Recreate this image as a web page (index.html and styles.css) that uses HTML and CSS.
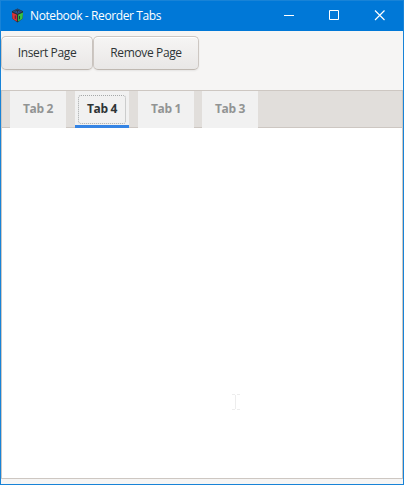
FILE: index.html
```html
<!DOCTYPE html>
<html lang="en">
<head>
<meta charset="utf-8">
<title>Notebook - Reorder Tabs</title>
<link rel="stylesheet" href="styles.css">
</head>
<body>
<div class="window">
  <header class="titlebar">
    <svg class="logo" width="13" height="15" viewBox="0 0 14 16">
      <path d="M7 .5 13 3.5 12.5 11.5 7 15.5 1.5 11.5 1 3.5Z" fill="#26303b"/>
      <path d="M1 4.8 6.3 7.3V14.5L1.7 11.4Z" fill="#e03038"/>
      <path d="M13 4.8 7.7 7.3V14.5L12.3 11.4Z" fill="#35c544"/>
      <path d="M7 1 12 3.7 7 6 2 3.7Z" fill="#2b5595"/>
      <path d="M4 3.5 7 2.2l3 1.4M7 2v3M4.6 8v3.6M9.2 8.5v3.6" fill="none" stroke="#26303b"/>
    </svg>
    <h1 class="title">Notebook - Reorder Tabs</h1>
    <div class="controls">
      <svg width="11" height="11"><path d="M0 5.5h10" stroke="#fff"/></svg>
      <svg width="11" height="11"><path d="M.5 .5h9v9h-9z" fill="none" stroke="#fff"/></svg>
      <svg width="11" height="11"><path d="m1 .5 9.5 9.5m0-9.5L1 10" stroke="#fff" stroke-width="1.15"/></svg>
    </div>
  </header>
  <div class="toolbar">
    <button class="button insert"><span>Insert Page</span></button>
    <button class="button remove"><span>Remove Page</span></button>
  </div>
  <main class="notebook">
    <nav class="tabs">
      <div class="tab">Tab 2</div>
      <div class="tab active"><span class="focus">Tab 4</span></div>
      <div class="tab">Tab 1</div>
      <div class="tab last">Tab 3</div>
    </nav>
    <section class="page">
      <svg class="cursor" width="8" height="16"><path d="M0 .5h3m2 0h3M0 15.5h3m2 0h3M3.5 1v14" stroke="#ededed" fill="none"/></svg>
    </section>
  </main>
</div>
</body>
</html>
```
FILE: styles.css
```css
* { box-sizing: border-box; }
body { margin: 0; font-family: "Open Sans", "Noto Sans", sans-serif; font-size: 12px; }
.window {
  width: 404px; height: 485px;
  display: flex; flex-direction: column;
  border: 1px solid #1883d7;
  background: #f6f5f4;
}
.titlebar {
  height: 30px; flex: none;
  display: flex; align-items: center;
  padding: 0 0 1px 10px;
  background: #0078d7; color: #fff;
}
.logo { margin-right: 6px; }
.title { margin: 0; padding-top: 1px; font-size: 12px; font-weight: 400; line-height: 16px; letter-spacing: -0.4px; white-space: nowrap; }
.controls { margin-left: auto; display: flex; gap: 34px; padding-right: 18px; }
.controls svg { display: block; }
.toolbar { display: flex; height: 59px; flex: none; padding-top: 5px; }
.button {
  height: 34px; padding: 0;
  border: 1px solid #cdc7c2; border-bottom-color: #bfb8b1; border-radius: 5px;
  background: linear-gradient(to top, #e9e7e6, #f6f5f4);
  box-shadow: inset 0 1px #fff, 0 1px 2px rgba(0, 0, 0, .07);
  color: #2e3436; font: 12px/16px "Open Sans", "Noto Sans", sans-serif;
  letter-spacing: -0.36px; white-space: nowrap;
}
.insert { width: 92px; }
.remove { width: 106px; }
.notebook {
  flex: 1; margin-bottom: 5px;
  display: flex; flex-direction: column;
  border: 1px solid #cdc7c2;
  background: #fff;
}
.tabs {
  height: 37px; flex: none;
  display: flex; padding-left: 8px; gap: 9px;
  background: #e1dedb; box-shadow: inset 0 -1px #cdc7c2;
}
.tab {
  width: 56px; height: 37px;
  display: flex; justify-content: center; align-items: center;
  padding-bottom: 2px;
  background: #f1f1f1; color: #919494;
  font-weight: 700; line-height: 16px; letter-spacing: -0.35px; white-space: nowrap;
}
.tab.active { width: 54px; border-bottom: 3px solid #3584e4; color: #2e3436; padding: 3px 0 0; }
.tab.last { margin-left: -1px; }
.focus {
  width: 48px; height: 29px; padding-bottom: 1px;
  display: flex; align-items: center; justify-content: center;
  border: 1px dotted #a5a8a8; border-radius: 3px;
}
.page { flex: 1; padding: 266px 0 0 230px; }
.cursor { display: block; }
```
